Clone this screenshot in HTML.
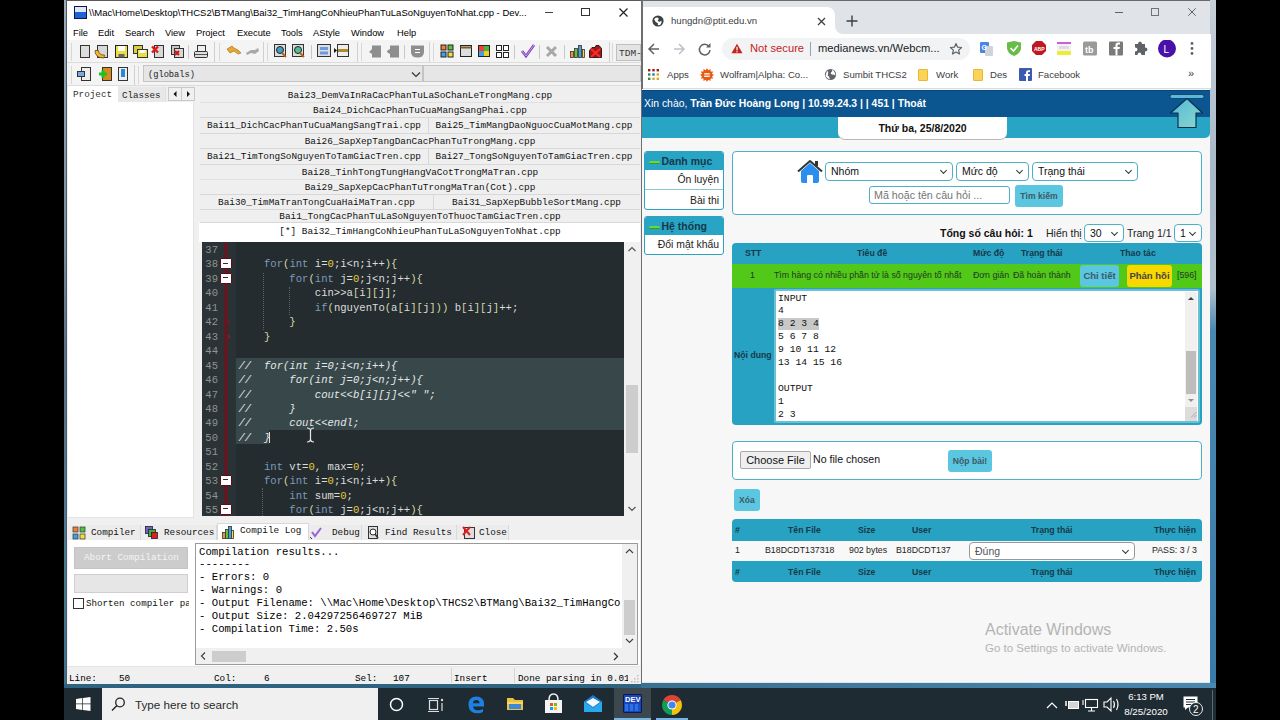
<!DOCTYPE html>
<html><head><meta charset="utf-8">
<style>
*{margin:0;padding:0;box-sizing:border-box}
html,body{width:1280px;height:720px;overflow:hidden;background:#000;font-family:"Liberation Sans",sans-serif}
.a{position:absolute}
.m{font-family:"Liberation Mono",monospace}
.nw{white-space:nowrap}
/* dev c++ */
#dev{left:64px;top:0;width:579px;height:688px;background:#f0f0f0}
.menu span{position:absolute;top:27.5px;font-size:9.3px;color:#000}
.tb{background:#f4f4f4;border-bottom:1px solid #dcdcdc}
.ico{position:absolute;width:13px;height:14px}
.sep{position:absolute;width:1px;background:#c8c8c8}
.etab{position:absolute;height:15px;font-size:9.4px;line-height:15px;color:#111;text-align:center;white-space:nowrap;overflow:hidden}
.code{position:absolute;left:238.5px;margin-top:1px;font-size:10.6px;line-height:14.45px;height:14.45px;color:#dcdcdc;white-space:pre}
.ln{position:absolute;left:202px;margin-top:1px;width:16px;text-align:right;font-size:10.55px;line-height:14.45px;color:#8c9494;font-family:"Liberation Mono",monospace}
.kw{color:#7c9aba}
.pa{color:#d8d8a8}
.nu{color:#e8c840}
.cm{color:#e4e8e8;font-style:italic}
.fold{position:absolute;left:220px;width:12px;height:11px;background:#fff;border:1.5px solid #5e0c18;border-radius:1px}
.fold:after{content:"";position:absolute;left:2px;top:3.5px;width:5px;height:1.2px;background:#3a2a30}
.btab{position:absolute;top:525px;height:16px;font-size:9.3px;line-height:16px;color:#111;font-family:"Liberation Mono",monospace;white-space:nowrap}
.log{position:absolute;left:199px;font-size:10.65px;line-height:12.85px;color:#000;white-space:pre;font-family:"Liberation Mono",monospace}
.st{position:absolute;top:672.5px;font-size:9.3px;line-height:12px;color:#000;font-family:"Liberation Mono",monospace;white-space:pre}
.sel{border:1px solid #4eb0c8;border-radius:4px;background:#fff;font-size:10.5px;line-height:17px;padding-left:5px;color:#111;white-space:nowrap}
.sel:after{content:"";position:absolute;right:6px;top:5px;width:4px;height:4px;border-right:1.2px solid #333;border-bottom:1.2px solid #333;transform:rotate(45deg)}
.btn{background:#5bc6e0;border-radius:3px;text-align:center;font-size:8.6px;font-weight:bold;color:#3c5a66;white-space:nowrap}
.th{font-size:8.7px;font-weight:bold;color:#17384a;white-space:nowrap}
.td{font-size:8.8px;color:#1e3a20;white-space:nowrap}
</style></head><body>

<!-- left wallpaper strip -->
<div class="a" style="left:64px;top:0;width:3px;height:688px;background:linear-gradient(#9aaab8,#7a8ca0 35%,#5a7288 50%,#4a7898 80%,#3a7090)"></div>

<!-- ============ DEV C++ WINDOW ============ -->
<div class="a" style="left:66px;top:0;width:576px;height:684px;background:#f0f0f0;border-left:1px solid #4e5a64;border-top:1px solid #5a5a5a"></div>
<!-- title bar -->
<div class="a" style="left:67px;top:1px;width:574px;height:39px;background:#fff"></div>
<div class="a" style="left:74px;top:6px;width:13px;height:13px;background:linear-gradient(#dfe6f5 0 42%,#1e62d8 42%);border:1px solid #0a1650"></div>
<div class="a nw" style="left:89px;top:7px;font-size:9.53px;color:#000">\\Mac\Home\Desktop\THCS2\BTMang\Bai32_TimHangCoNhieuPhanTuLaSoNguyenToNhat.cpp - Dev...</div>
<div class="a" style="left:545px;top:11.5px;width:8px;height:1.5px;background:#444"></div>
<div class="a" style="left:581px;top:8px;width:9px;height:8px;border:1.3px solid #333"></div>
<svg class="a" style="left:618.5px;top:7.5px" width="9" height="9"><path d="M0.5 0.5L8.5 8.5M8.5 0.5L0.5 8.5" stroke="#222" stroke-width="1.2"/></svg>
<!-- menu -->
<div class="menu">
<span style="left:73px">File</span><span style="left:98px">Edit</span><span style="left:125px">Search</span><span style="left:165px">View</span><span style="left:196px">Project</span><span style="left:237px">Execute</span><span style="left:281px">Tools</span><span style="left:313px">AStyle</span><span style="left:351px">Window</span><span style="left:397px">Help</span>
</div>
<!-- toolbar rows -->
<div class="a tb" style="left:67px;top:40px;width:574px;height:23px"></div>
<div class="a tb" style="left:67px;top:63px;width:574px;height:23px"></div>
<!-- row1 handles / separators -->
<div class="sep" style="left:71px;top:43px;height:18px;background:#d8d8d8"></div>
<div class="sep" style="left:188px;top:45px;height:14px"></div>
<div class="sep" style="left:214px;top:42px;height:20px;background:#d0d0d0"></div>
<div class="sep" style="left:219px;top:43px;height:18px;background:#d8d8d8"></div>
<div class="sep" style="left:263px;top:42px;height:20px;background:#d0d0d0"></div>
<div class="sep" style="left:267px;top:43px;height:18px;background:#d8d8d8"></div>
<div class="sep" style="left:311px;top:45px;height:14px"></div>
<div class="sep" style="left:357px;top:42px;height:20px;background:#d0d0d0"></div>
<div class="sep" style="left:361px;top:43px;height:18px;background:#d8d8d8"></div>
<div class="sep" style="left:404px;top:45px;height:14px"></div>
<div class="sep" style="left:429px;top:42px;height:20px;background:#d0d0d0"></div>
<div class="sep" style="left:433px;top:43px;height:18px;background:#d8d8d8"></div>
<div class="sep" style="left:514px;top:45px;height:14px"></div>
<div class="sep" style="left:539px;top:45px;height:14px"></div>
<div class="sep" style="left:564px;top:45px;height:14px"></div>
<div class="sep" style="left:609px;top:42px;height:20px;background:#d0d0d0"></div>
<div class="sep" style="left:612px;top:43px;height:18px;background:#d8d8d8"></div>
<!-- row1 icons -->
<svg class="a" style="left:78px;top:43px" width="540" height="17">
 <g stroke="#333" stroke-width="1">
 <rect x="2.5" y="2.5" width="9" height="12" fill="#dcdcdc"/>
 <rect x="19.5" y="2.5" width="10" height="12" fill="#d8d8d8"/><path d="M17 7.5Q17 15 26 15L26.5 12Q21 12.5 20.5 7.5Z" fill="#f0b830" stroke="#6a4a10" stroke-width="0.8"/>
 <rect x="37.5" y="2.5" width="12" height="12" fill="#e8e040" stroke="#222"/><rect x="40" y="3" width="7" height="5" fill="#fff" stroke="none"/><rect x="40.5" y="11" width="6" height="3.5" fill="#666" stroke="none"/>
 <rect x="55.5" y="2.5" width="9" height="8" fill="#d8d040"/><rect x="59.5" y="6.5" width="10" height="8" fill="#e8e040"/><rect x="61.5" y="7" width="6" height="3" fill="#fff" stroke="none"/>
 <rect x="76.5" y="2.5" width="9" height="12" fill="#d8d8d8"/><path d="M74 3.5 L80 9.5 M80 3.5 L74 9.5" stroke="#e01818" stroke-width="2.4"/>
 <rect x="93.5" y="2.5" width="8" height="9" fill="#c8c8c8"/><rect x="96.5" y="5.5" width="9" height="9" fill="#d8d8d8"/><path d="M97 8 L101 12 M101 8 L97 12" stroke="#d01818" stroke-width="2.2"/>
 <rect x="119.5" y="2.5" width="8" height="6" fill="#eee"/><rect x="116.5" y="8.5" width="13" height="6" rx="1" fill="#ddd"/><path d="M117 11.5H129" stroke="#555"/>
 </g>
 <path d="M149 6 L154 3 L156 5 L160 7 L163 10 L160 11 L156 8 L152 10Z" fill="#e8a830" stroke="#9a6a10" stroke-width="0.6"/>
 <path d="M168 10 L173 7 L177 7 L180 5 L181 8 L177 11 L173 10 L169 12Z" fill="#a8a8a8"/>
 <g stroke="#333"><rect x="196.5" y="1.5" width="11" height="12" fill="#ddd"/><rect x="214.5" y="1.5" width="11" height="12" fill="#ddd"/></g>
 <circle cx="202" cy="7" r="3.5" fill="#40a0c0" stroke="#222"/><path d="M204 10 L208 14" stroke="#c06010" stroke-width="2"/>
 <circle cx="220" cy="7" r="3.5" fill="#50c090" stroke="#222"/><path d="M222 10 L226 14" stroke="#c06010" stroke-width="2"/>
 <rect x="239.5" y="1.5" width="13" height="12" fill="#ddd" stroke="#333"/><rect x="242" y="4" width="8" height="3" fill="#6a9ae0"/><rect x="242" y="8.5" width="8" height="3" fill="#6a9ae0"/>
 <path d="M256 5 L259 7.5 L256 10Z" fill="#111"/><rect x="259.5" y="1.5" width="11" height="12" fill="#eee" stroke="#333"/><rect x="260" y="6" width="10" height="3" fill="#b08a30"/>
 <g fill="#8e8e8e">
 <path d="M294 2.5H303V14.5H294V11L291 9L294 6Z"/><path d="M312 2.5H321V14.5H312V11L309.5 9.5Q308.5 8.5 309.5 7.5L312 6Z"/>
 <path d="M333 2.5H346V9Q346 14.5 339.5 14.5Q333 14.5 333 9Z"/>
 </g><path d="M337 6.5H342M337 9.5H342" stroke="#fff" stroke-width="1.1"/>
 <g stroke="#222" stroke-width="1">
 <rect x="363" y="2" width="5" height="5" fill="#f08030"/><rect x="370" y="2" width="5" height="5" fill="#60c040"/><rect x="363" y="9" width="5" height="5" fill="#40a0e0"/><rect x="370" y="9" width="5" height="5" fill="#f0e040"/>
 <rect x="382.5" y="2.5" width="11" height="11" fill="#ddd"/><path d="M382.5 4.5 H393.5" stroke="#7a5a30" stroke-width="2"/>
 <rect x="400.5" y="2.5" width="11" height="11" fill="#f04030"/><rect x="406" y="3" width="5" height="5" fill="#50b040" stroke="none"/><rect x="401" y="8" width="5" height="5" fill="#40a0e0" stroke="none"/><rect x="406" y="8" width="5" height="5" fill="#f0d020" stroke="none"/>
 <rect x="418.5" y="2.5" width="5" height="5" fill="#fff"/><rect x="425.5" y="2.5" width="5" height="5" fill="#fff"/><rect x="418.5" y="9.5" width="5" height="5" fill="#fff"/><rect x="425.5" y="9.5" width="5" height="5" fill="#fff"/>
 </g>
 <path d="M444 8 L448 13 L456 2" stroke="#7a40b8" stroke-width="2.6" fill="none"/><path d="M444 8 L448 13 L456 2" stroke="#c8a0f0" stroke-width="1" fill="none"/>
 <path d="M469 4 L478 13 M478 4 L469 13" stroke="#a8a8a8" stroke-width="3"/>
 <g stroke="#333" stroke-width="0.8"><rect x="492.5" y="8.5" width="3" height="6" fill="#f09030"/><rect x="496.5" y="5.5" width="3" height="9" fill="#60c040"/><rect x="500.5" y="2.5" width="3" height="12" fill="#40a0e0"/><rect x="504.5" y="6.5" width="2" height="8" fill="#f0e040"/></g>
 <path d="M511.5 14.5V7.5L514 4.5H517L518 2.5H521L523.5 5.5V14.5Z" fill="#a01818" stroke="#222"/><path d="M513 6 L522 14 M522 6 L513 14" stroke="#ff2a2a" stroke-width="2.2"/>
</svg>
<div class="a" style="left:616px;top:44px;width:25px;height:17px;background:#e4e4e4;border:1px solid #c0c0c0"></div>
<div class="a m nw" style="left:619px;top:47.5px;font-size:9.5px;color:#333">TDM-</div>
<!-- row2 -->
<div class="sep" style="left:71px;top:66px;height:18px;background:#d8d8d8"></div>
<svg class="a" style="left:76px;top:66px" width="60" height="17">
 <rect x="5.5" y="1.5" width="9" height="13" fill="#eee" stroke="#333"/><rect x="1.5" y="5.5" width="7" height="5" fill="#7aa8e0" stroke="#333"/>
 <rect x="26.5" y="1.5" width="9" height="13" fill="#d88a20" stroke="#333"/><path d="M23 8 H31 M27 4 V12" stroke="#20c020" stroke-width="3"/>
 <rect x="42.5" y="1.5" width="9" height="13" fill="#eee" stroke="#333"/><rect x="45" y="3" width="4" height="8" fill="#2a88d8"/>
</svg>
<div class="sep" style="left:134px;top:65px;height:20px;background:#d0d0d0"></div>
<div class="sep" style="left:138px;top:66px;height:18px;background:#d8d8d8"></div>
<div class="a" style="left:143px;top:65px;width:280px;height:17px;background:#e6e6e6;border:1px solid #c4c4c4"></div>
<div class="a m nw" style="left:148px;top:69.5px;font-size:8.7px;color:#222">(globals)</div>
<svg class="a" style="left:411px;top:71px" width="10" height="7"><path d="M1 1.5 L5 5.5 L9 1.5" stroke="#333" fill="none" stroke-width="1.2"/></svg>
<div class="a" style="left:423px;top:65px;width:218px;height:17px;background:#e6e6e6;border:1px solid #c4c4c4"></div>

<!-- project / classes tabs -->
<div class="a" style="left:67px;top:86px;width:574px;height:440px;background:#f0f0f0"></div>
<div class="a" style="left:68px;top:86px;width:50px;height:17px;background:#fff"></div>
<div class="a m nw" style="left:73px;top:89px;font-size:9.3px;color:#333">Project</div>
<div class="a" style="left:118px;top:87px;width:48px;height:15px;background:#e8e8e8;border-right:1px solid #e0e0e0"></div>
<div class="a m nw" style="left:122px;top:90px;font-size:9.2px;color:#222">Classes</div>
<div class="a" style="left:168px;top:87px;width:14px;height:14px;border:1px solid #c8c8c8;background:#f0f0f0"></div>
<div class="a" style="left:181px;top:87px;width:14px;height:14px;border:1px solid #c8c8c8;background:#f0f0f0"></div>
<svg class="a" style="left:168px;top:87px" width="27" height="14"><path d="M8.5 4 L5.5 7 L8.5 10Z M19 4 L22 7 L19 10Z" fill="#111"/></svg>
<div class="a" style="left:68px;top:102px;width:126px;height:416px;background:#fff;border-right:1px solid #e4e4e4;border-bottom:1px solid #e4e4e4"></div>

<!-- editor tab rows -->
<div class="a" style="left:200px;top:87px;width:440px;height:136px;background:#efefef"></div>
<div class="a" style="left:200px;top:102px;width:440px;height:1px;background:#e0e0e0"></div>
<div class="a" style="left:200px;top:117px;width:440px;height:1px;background:#d8d8d8"></div>
<div class="a" style="left:200px;top:133px;width:440px;height:1px;background:#d8d8d8"></div>
<div class="a" style="left:200px;top:148px;width:440px;height:1px;background:#d8d8d8"></div>
<div class="a" style="left:200px;top:164px;width:440px;height:1px;background:#d8d8d8"></div>
<div class="a" style="left:200px;top:179px;width:440px;height:1px;background:#e0e0e0"></div>
<div class="a" style="left:200px;top:194px;width:440px;height:1px;background:#d8d8d8"></div>
<div class="a" style="left:200px;top:209px;width:440px;height:1px;background:#d8d8d8"></div>
<div class="a" style="left:200px;top:222px;width:440px;height:1px;background:#d8d8d8"></div>
<div class="a" style="left:428px;top:118px;width:1px;height:15px;background:#d8d8d8"></div>
<div class="a" style="left:428px;top:149px;width:1px;height:15px;background:#d8d8d8"></div>
<div class="a" style="left:433px;top:195px;width:1px;height:14px;background:#d8d8d8"></div>
<div class="a" style="left:199px;top:223px;width:441px;height:19px;background:#fff"></div>
<div class="etab m" style="left:200px;top:88px;width:440px">Bai23_DemVaInRaCacPhanTuLaSoChanLeTrongMang.cpp</div>
<div class="etab m" style="left:200px;top:103px;width:440px">Bai24_DichCacPhanTuCuaMangSangPhai.cpp</div>
<div class="etab m" style="left:200px;top:118px;width:228px">Bai11_DichCacPhanTuCuaMangSangTrai.cpp</div>
<div class="etab m" style="left:428px;top:118px;width:212px">Bai25_TimMangDaoNguocCuaMotMang.cpp</div>
<div class="etab m" style="left:200px;top:134px;width:440px">Bai26_SapXepTangDanCacPhanTuTrongMang.cpp</div>
<div class="etab m" style="left:200px;top:149px;width:228px">Bai21_TimTongSoNguyenToTamGiacTren.cpp</div>
<div class="etab m" style="left:428px;top:149px;width:212px">Bai27_TongSoNguyenToTamGiacTren.cpp</div>
<div class="etab m" style="left:200px;top:165px;width:440px">Bai28_TinhTongTungHangVaCotTrongMaTran.cpp</div>
<div class="etab m" style="left:200px;top:180px;width:440px">Bai29_SapXepCacPhanTuTrongMaTran(Cot).cpp</div>
<div class="etab m" style="left:200px;top:195px;width:233px">Bai30_TimMaTranTongCuaHaiMaTran.cpp</div>
<div class="etab m" style="left:433px;top:195px;width:207px">Bai31_SapXepBubbleSortMang.cpp</div>
<div class="etab m" style="left:200px;top:209px;width:440px">Bai1_TongCacPhanTuLaSoNguyenToThuocTamGiacTren.cpp</div>
<div class="etab m" style="left:200px;top:224px;width:440px">[*] Bai32_TimHangCoNhieuPhanTuLaSoNguyenToNhat.cpp</div>

<!-- editor -->
<div class="a" style="left:202px;top:242px;width:422px;height:274px;background:#242c2f"></div>
<div class="a" style="left:202px;top:242px;width:22px;height:274px;background:#2b3336"></div>
<div class="a" style="left:224px;top:242px;width:4px;height:274px;background:#5e1a22"></div>
<div class="a" style="left:228px;top:242px;width:8px;height:274px;background:#293235"></div>
<div class="a" style="left:228px;top:320px;width:2px;height:3px;background:#6a1a28"></div>
<div class="a" style="left:228px;top:335px;width:2px;height:3px;background:#8a1a2a"></div>
<div class="a" style="left:236px;top:357.6px;width:388px;height:72.25px;background:#384749"></div>
<div class="a" style="left:236px;top:429.85px;width:33px;height:14.45px;background:#384749"></div>
<div class="a" style="left:624px;top:242px;width:16px;height:274px;background:#f0f0f0"></div>
<svg class="a" style="left:624px;top:242px" width="16" height="274"><path d="M4.5 9 L8 5.5 L11.5 9" stroke="#555" fill="none" stroke-width="1.2"/><path d="M4.5 265 L8 268.5 L11.5 265" stroke="#555" fill="none" stroke-width="1.2"/></svg>
<div class="a" style="left:626px;top:385px;width:12px;height:68px;background:#cdcdcd"></div>
<div id="lns"></div>
<div class="ln" style="top:242px">37</div>
<div class="ln" style="top:256.45px">38</div>
<div class="ln" style="top:270.9px">39</div>
<div class="ln" style="top:285.35px">40</div>
<div class="ln" style="top:299.8px">41</div>
<div class="ln" style="top:314.25px">42</div>
<div class="ln" style="top:328.7px">43</div>
<div class="ln" style="top:343.15px">44</div>
<div class="ln" style="top:357.6px">45</div>
<div class="ln" style="top:372.05px">46</div>
<div class="ln" style="top:386.5px">47</div>
<div class="ln" style="top:400.95px">48</div>
<div class="ln" style="top:415.4px">49</div>
<div class="ln" style="top:429.85px">50</div>
<div class="ln" style="top:444.3px">51</div>
<div class="ln" style="top:458.75px">52</div>
<div class="ln" style="top:473.2px">53</div>
<div class="ln" style="top:487.65px">54</div>
<div class="ln" style="top:502.1px">55</div>
<div class="fold" style="top:258px"></div>
<div class="fold" style="top:272.7px"></div>
<div class="fold" style="top:474.5px"></div>
<div class="fold" style="top:503.5px"></div>
<div class="code m" style="top:256.45px">    <span class="kw">for</span><span class="pa">(</span><span class="kw">int</span> i=<span class="nu">0</span>;i&lt;n;i++<span class="pa">){</span></div>
<div class="code m" style="top:270.9px">        <span class="kw">for</span><span class="pa">(</span><span class="kw">int</span> j=<span class="nu">0</span>;j&lt;n;j++<span class="pa">){</span></div>
<div class="code m" style="top:285.35px">            cin&gt;&gt;a<span class="pa">[</span>i<span class="pa">][</span>j<span class="pa">]</span>;</div>
<div class="code m" style="top:299.8px">            <span class="kw">if</span><span class="pa">(</span>nguyenTo<span class="pa">(</span>a<span class="pa">[</span>i<span class="pa">][</span>j<span class="pa">]))</span> b<span class="pa">[</span>i<span class="pa">][</span>j<span class="pa">]</span>++;</div>
<div class="code m" style="top:314.25px">        <span class="pa">}</span></div>
<div class="code m" style="top:328.7px">    <span class="pa">}</span></div>
<div class="code m cm" style="top:357.6px">//  for(int i=0;i&lt;n;i++){</div>
<div class="code m cm" style="top:372.05px">//      for(int j=0;j&lt;n;j++){</div>
<div class="code m cm" style="top:386.5px">//          cout&lt;&lt;b[i][j]&lt;&lt;" ";</div>
<div class="code m cm" style="top:400.95px">//      }</div>
<div class="code m cm" style="top:415.4px">//      cout&lt;&lt;endl;</div>
<div class="code m cm" style="top:429.85px">//  }</div>
<div class="code m" style="top:458.75px">    <span class="kw">int</span> vt=<span class="nu">0</span>, max=<span class="nu">0</span>;</div>
<div class="code m" style="top:473.2px">    <span class="kw">for</span><span class="pa">(</span><span class="kw">int</span> i=<span class="nu">0</span>;i&lt;n;i++<span class="pa">){</span></div>
<div class="code m" style="top:487.65px">        <span class="kw">int</span> sum=<span class="nu">0</span>;</div>
<div class="code m" style="top:502.1px">        <span class="kw">for</span><span class="pa">(</span><span class="kw">int</span> j=<span class="nu">0</span>;j&lt;n;j++<span class="pa">){</span></div>
<div class="a" style="left:269px;top:432px;width:1px;height:11px;background:#e0e0e0"></div>
<svg class="a" style="left:306px;top:427px" width="9" height="16"><path d="M1 1 Q4.5 1 4.5 4 V12 Q4.5 15 1 15 M8 1 Q4.5 1 4.5 4 M8 15 Q4.5 15 4.5 12" stroke="#e8e8e8" stroke-width="1.2" fill="none"/></svg>
<!-- indent guides -->
<div class="a" style="left:263px;top:273px;width:1px;height:57px;border-left:1px dotted #5a6668"></div>
<div class="a" style="left:289px;top:287px;width:1px;height:28px;border-left:1px dotted #5a6668"></div>
<div class="a" style="left:262px;top:488px;width:1px;height:28px;border-left:1px dotted #5a6668"></div>

<!-- bottom tabs -->
<div class="a" style="left:67px;top:520px;width:574px;height:20px;background:#f0f0f0"></div>
<div class="a" style="left:68px;top:525px;width:73px;height:15px;background:#ececec;border-right:1px solid #dadada"></div>
<div class="a" style="left:141px;top:525px;width:76px;height:15px;background:#ececec;border-right:1px solid #dadada"></div>
<div class="a" style="left:217px;top:523px;width:92px;height:18px;background:#fff;border:1px solid #d8d8d8;border-bottom:0"></div>
<div class="a" style="left:309px;top:525px;width:53px;height:15px;background:#ececec;border-right:1px solid #dadada"></div>
<div class="a" style="left:362px;top:525px;width:95px;height:15px;background:#ececec;border-right:1px solid #dadada"></div>
<div class="a" style="left:457px;top:525px;width:52px;height:15px;background:#ececec;border-right:1px solid #dadada"></div>
<svg class="a" style="left:72px;top:525px" width="440" height="15">
 <g stroke="#333" stroke-width="0.7"><rect x="1" y="2" width="5" height="5" fill="#f08030"/><rect x="8" y="2" width="5" height="5" fill="#50c040"/><rect x="1" y="9" width="5" height="5" fill="#40a0e0"/><rect x="8" y="9" width="5" height="5" fill="#f0e040"/></g>
 <g stroke="#222" stroke-width="0.8"><rect x="73.5" y="1.5" width="7" height="7" fill="#7060d0"/><rect x="76.5" y="4.5" width="7" height="7" fill="#40b040"/><rect x="79.5" y="7.5" width="6" height="6" fill="#e02020"/></g>
 <g stroke="#333" stroke-width="0.8"><rect x="150.5" y="7.5" width="3" height="6" fill="#f09030"/><rect x="153.5" y="4.5" width="3" height="9" fill="#60c040"/><rect x="156.5" y="1.5" width="3" height="12" fill="#40a0e0"/><rect x="159.5" y="5.5" width="2" height="8" fill="#f0e040"/></g>
 <path d="M240 7 L243 11 L249 3" stroke="#9a60d8" stroke-width="2" fill="none"/><path d="M238 12 L240 14" stroke="#333"/>
 <rect x="296.5" y="1.5" width="9" height="12" fill="#ddd" stroke="#333"/><circle cx="301" cy="7" r="3" fill="#fff" stroke="#222"/><path d="M303 9 L306 13" stroke="#333" stroke-width="1.5"/>
 <rect x="392.5" y="2.5" width="10" height="11" fill="#ddd" stroke="#333"/><path d="M391 2 L398 10 M398 2 L391 10" stroke="#e02020" stroke-width="2"/>
</svg>
<div class="btab" style="left:91px">Compiler</div>
<div class="btab" style="left:164px">Resources</div>
<div class="btab" style="left:240px;top:523px">Compile Log</div>
<div class="btab" style="left:332px">Debug</div>
<div class="btab" style="left:385px">Find Results</div>
<div class="btab" style="left:479px">Close</div>

<!-- bottom panel -->
<div class="a" style="left:68px;top:540px;width:572px;height:126px;background:#fff"></div>
<div class="a" style="left:74px;top:547px;width:114px;height:22px;background:#cccccc;border:1px solid #c4c4c4"></div>
<div class="a m nw" style="left:84px;top:552px;font-size:9.3px;color:#f4f4f4">Abort Compilation</div>
<div class="a" style="left:74px;top:574px;width:114px;height:19px;background:#e6e6e6;border:1px solid #cfcfcf"></div>
<div class="a" style="left:73px;top:598px;width:11px;height:11px;background:#fff;border:1px solid #333"></div>
<div class="a m nw" style="left:86px;top:598px;font-size:9.2px;color:#111;width:103px;overflow:hidden">Shorten compiler paths</div>
<div class="a" style="left:195px;top:543px;width:443px;height:122px;background:#fff;border:1px solid #9a9a9a"></div>
<div class="log" style="top:545.5px">Compilation results...
--------
- Errors: 0
- Warnings: 0
- Output Filename: \\Mac\Home\Desktop\THCS2\BTMang\Bai32_TimHangCo
- Output Size: 2.04297256469727 MiB
- Compilation Time: 2.50s</div>
<div class="a" style="left:622px;top:544px;width:15px;height:104px;background:#f0f0f0"></div>
<div class="a" style="left:624px;top:600px;width:11px;height:35px;background:#cdcdcd"></div>
<svg class="a" style="left:622px;top:544px" width="15" height="104"><path d="M4 9 L7.5 5.5 L11 9" stroke="#444" fill="none" stroke-width="1.2"/><path d="M4 95 L7.5 98.5 L11 95" stroke="#444" fill="none" stroke-width="1.2"/></svg>
<div class="a" style="left:196px;top:648px;width:426px;height:16px;background:#f0f0f0"></div>
<div class="a" style="left:212px;top:651px;width:34px;height:11px;background:#cdcdcd"></div>
<svg class="a" style="left:196px;top:648px" width="441" height="16"><path d="M9 4.5 L5.5 8 L9 11.5" stroke="#444" fill="none" stroke-width="1.2"/><path d="M418 5 L421.5 8.5 L418 12" stroke="#333" fill="none" stroke-width="1.3"/></svg>
<div class="a" style="left:622px;top:648px;width:15px;height:16px;background:#f0f0f0"></div>

<!-- status bar -->
<div class="a" style="left:67px;top:666px;width:574px;height:18px;background:#f0f0f0;border-top:1px solid #e4e4e4"></div>
<div class="st" style="left:69px">Line:</div><div class="st" style="left:119px">50</div>
<div class="st" style="left:214px">Col:</div><div class="st" style="left:264px">6</div>
<div class="st" style="left:355px">Sel:</div><div class="st" style="left:393px">107</div>
<div class="st" style="left:454px">Insert</div>
<div class="st" style="left:518px;width:110px;overflow:hidden">Done parsing in 0.01</div>
<div class="a" style="left:451px;top:668px;width:1px;height:15px;background:#d4d4d4"></div>
<div class="a" style="left:514px;top:668px;width:1px;height:15px;background:#d4d4d4"></div>
<svg class="a" style="left:630px;top:674px" width="10" height="10"><g fill="#c0c0c0"><rect x="7" y="7" width="1.5" height="1.5"/><rect x="7" y="4" width="1.5" height="1.5"/><rect x="4" y="7" width="1.5" height="1.5"/><rect x="7" y="1" width="1.5" height="1.5"/><rect x="1" y="7" width="1.5" height="1.5"/><rect x="4" y="4" width="1.5" height="1.5"/></g></svg>
<div class="a" style="left:64px;top:684px;width:578px;height:4px;background:#2e6482"></div>

<!-- ============ CHROME WINDOW ============ -->
<div class="a" style="left:641px;top:0;width:2px;height:688px;background:#6e6e6e"></div>
<div class="a" style="left:643px;top:0;width:567px;height:683px;background:#f7f7f7"></div>
<div class="a" style="left:643px;top:0;width:567px;height:34px;background:#e0e3e7;border-top:1px solid #6a6a6a"></div>
<div class="a" style="left:1210px;top:0;width:6px;height:688px;background:linear-gradient(#c8d0d8,#a8b8c8 25%,#b0c0cc 42%,#4a88b0 48%,#3a7aa8)"></div>
<!-- tab -->
<div class="a" style="left:643px;top:7px;width:192px;height:28px;background:#fff;border-radius:0 8px 0 0"></div>
<svg class="a" style="left:652px;top:15px" width="12" height="12" viewBox="0 0 12 12"><circle cx="6" cy="6" r="5.6" fill="#3c4043"/><path d="M2.2 4.2Q3.5 2 6 2.8Q7.5 3.5 6.2 5Q5 6 6.6 6.6Q8.5 7 9.2 5.6Q10.2 7.5 8.8 9.2Q7 10.8 5.6 9.8Q6.8 8.6 5.2 7.8Q3.2 7.2 2.2 4.2Z" fill="#fff"/></svg>
<div class="a nw" style="left:671px;top:15px;font-size:9.6px;color:#3c4043">hungdn@ptit.edu.vn</div>
<svg class="a" style="left:817px;top:17px" width="9" height="9"><path d="M1 1L8 8M8 1L1 8" stroke="#3c4043" stroke-width="1.3"/></svg>
<div class="a" style="left:835px;top:26px;width:8px;height:8px;background:#fff"></div><div class="a" style="left:835px;top:26px;width:8px;height:8px;background:#e0e3e7;border-radius:0 0 0 8px"></div>
<svg class="a" style="left:846px;top:15px" width="12" height="12"><path d="M6 0.5V11.5M0.5 6H11.5" stroke="#3c4043" stroke-width="1.4"/></svg>
<div class="a" style="left:1115px;top:12px;width:8px;height:1px;background:#5f6368"></div>
<div class="a" style="left:1151px;top:8px;width:8px;height:8px;border:1.2px solid #707478"></div>
<svg class="a" style="left:1188px;top:8px" width="8" height="8"><path d="M0.3 0.3L7.7 7.7M7.7 0.3L0.3 7.7" stroke="#5f6368" stroke-width="1"/></svg>
<!-- toolbar -->
<div class="a" style="left:643px;top:34px;width:568px;height:54px;background:#fff"></div>
<svg class="a" style="left:646px;top:41px" width="70" height="16">
 <path d="M13 8H3.5M8 3L3 8L8 13" stroke="#5f6368" stroke-width="1.5" fill="none"/>
 <path d="M28 8H37.5M33 3L38 8L33 13" stroke="#bdc1c6" stroke-width="1.5" fill="none"/>
 <path d="M63 5.5A5.3 5.3 0 1 0 64 9" stroke="#5f6368" stroke-width="1.5" fill="none"/><path d="M64.5 2V6.5H60Z" fill="#5f6368"/>
</svg>
<div class="a" style="left:722px;top:38px;width:248px;height:22px;background:#f1f3f4;border-radius:11px"></div>
<svg class="a" style="left:731px;top:43px" width="12" height="11"><path d="M6 0.8L11.5 10.3H0.5Z" fill="#c5221f"/><rect x="5.4" y="3.8" width="1.2" height="3.6" fill="#fff"/><rect x="5.4" y="8.2" width="1.2" height="1.2" fill="#fff"/></svg>
<div class="a nw" style="left:750px;top:42px;font-size:11.2px;color:#c5221f">Not secure</div>
<div class="a" style="left:810px;top:42px;width:1px;height:14px;background:#9aa0a6"></div>
<div class="a nw" style="left:818px;top:42px;font-size:11.2px;color:#202124">medianews.vn/Webcm...</div>
<svg class="a" style="left:949px;top:42px" width="14" height="14"><path d="M7 1.5L8.6 5.2L12.6 5.5L9.6 8.1L10.5 12L7 9.9L3.5 12L4.4 8.1L1.4 5.5L5.4 5.2Z" stroke="#5f6368" stroke-width="1.2" fill="none" stroke-linejoin="round"/></svg>
<!-- extensions -->
<svg class="a" style="left:978px;top:40px" width="225" height="18">
 <rect x="2" y="2" width="9" height="11" rx="1" fill="#4a84e8"/><rect x="7" y="6" width="8" height="10" rx="1" fill="#d0d4da"/><text x="3.5" y="10" font-size="7" fill="#fff" font-family="Liberation Sans" font-weight="bold">G</text>
 <path d="M29 2.5L36 1L43 2.5V8Q43 13 36 16Q29 13 29 8Z" fill="#68bc48"/><path d="M32.5 8L35.5 11L40 5.5" stroke="#fff" stroke-width="1.6" fill="none"/>
 <path d="M58 1H64L68 5V11L64 15H58L54 11V5Z" fill="#c01820"/><text x="56" y="10.5" font-size="5" fill="#fff" font-family="Liberation Sans" font-weight="bold">ABP</text>
 <rect x="79" y="2" width="14" height="13" fill="#f4f0f8"/><rect x="79" y="2" width="14" height="2" fill="#c860d8"/><rect x="79" y="11" width="14" height="4" fill="#f0ec30"/><rect x="81" y="6" width="10" height="3" fill="#ddd"/>
 <rect x="105" y="1.5" width="14" height="14" rx="1.5" fill="#9a9a9a"/><text x="107" y="12.5" font-size="9" fill="#fff" font-family="Liberation Sans" font-weight="bold">tb</text>
 <rect x="131" y="1.5" width="14" height="14" rx="1" fill="#7a7a7a"/><path d="M139.5 15.5V9H141.5L142 7H139.5V5.5Q139.5 4.5 140.5 4.5H142V2.5H140Q137.5 2.5 137.5 5V7H135.5V9H137.5V15.5Z" fill="#fff"/>
 <path d="M157 4H160Q160 1.5 162 1.5Q164 1.5 164 4H167V7.5Q169.5 7.5 169.5 9.5Q169.5 11.5 167 11.5V15H163.5Q163.5 12.5 161.5 12.5Q159.5 12.5 159.5 15H157V11.5Q159.5 11.5 159.5 9.5Q159.5 7.5 157 7.5Z" fill="#5f6368" transform="translate(0,0)"/>
 <circle cx="189" cy="8.5" r="9" fill="#4a10a8"/><text x="185.5" y="12.5" font-size="10" fill="#fff" font-family="Liberation Sans">L</text>
 <circle cx="214" cy="3.5" r="1.4" fill="#5f6368"/><circle cx="214" cy="8.5" r="1.4" fill="#5f6368"/><circle cx="214" cy="13.5" r="1.4" fill="#5f6368"/>
</svg>
<!-- bookmarks -->
<svg class="a" style="left:648px;top:69px" width="12" height="12"><g>
 <rect x="0" y="0" width="2.4" height="2.4" fill="#a01818"/><rect x="4.3" y="0" width="2.4" height="2.4" fill="#a01818"/><rect x="8.6" y="0" width="2.4" height="2.4" fill="#a01818"/>
 <rect x="0" y="4.3" width="2.4" height="2.4" fill="#2a8a40"/><rect x="4.3" y="4.3" width="2.4" height="2.4" fill="#2a70c8"/><rect x="8.6" y="4.3" width="2.4" height="2.4" fill="#d8a820"/>
 <rect x="0" y="8.6" width="2.4" height="2.4" fill="#2a8a40"/><rect x="4.3" y="8.6" width="2.4" height="2.4" fill="#d8a820"/><rect x="8.6" y="8.6" width="2.4" height="2.4" fill="#d8a820"/></g></svg>
<div class="a nw" style="left:667px;top:69px;font-size:9.6px;color:#3c4043">Apps</div>
<svg class="a" style="left:700px;top:68px" width="14" height="14" viewBox="0 0 14 14"><path d="M7 0L8.2 2.2L10.5 1L10.6 3.5L13.2 3.6L12 5.8L14 7L12 8.2L13.2 10.4L10.6 10.5L10.5 13L8.2 11.8L7 14L5.8 11.8L3.5 13L3.4 10.5L0.8 10.4L2 8.2L0 7L2 5.8L0.8 3.6L3.4 3.5L3.5 1L5.8 2.2Z" fill="#e85a10"/><rect x="4.2" y="5.2" width="5.6" height="1.3" fill="#fff"/><rect x="4.2" y="7.6" width="5.6" height="1.3" fill="#fff"/></svg>
<div class="a nw" style="left:720px;top:69px;font-size:9.6px;color:#3c4043">Wolfram|Alpha: Co...</div>
<svg class="a" style="left:824px;top:68px" width="13" height="13" viewBox="0 0 13 13"><circle cx="6.5" cy="6.5" r="5.6" fill="#5f6368"/><path d="M3 2.5 Q5 4 4 6 Q3 7.5 5 8.5 L6 11.5 Q3 11 1.5 8 Z M8 1.5 Q9 3.5 7 4.5 Q6 6 8 6.5 Q10.5 6.5 11.3 7.5 Q11.5 4 8 1.5Z" fill="#fff"/></svg>
<div class="a nw" style="left:843px;top:69px;font-size:9.6px;color:#3c4043">Sumbit THCS2</div>
<div class="a" style="left:918px;top:69px;width:10px;height:12px;background:#fbd35a;border-radius:1px;border:1px solid #e8b830"></div>
<div class="a nw" style="left:936px;top:69px;font-size:9.6px;color:#3c4043">Work</div>
<div class="a" style="left:973px;top:69px;width:10px;height:12px;background:#fbd35a;border-radius:1px;border:1px solid #e8b830"></div>
<div class="a nw" style="left:990px;top:69px;font-size:9.6px;color:#3c4043">Des</div>
<svg class="a" style="left:1019px;top:68px" width="13" height="13"><rect width="13" height="13" rx="1" fill="#3b5bb0"/><path d="M9 13V8H10.6L11 6H9V4.8Q9 4 9.8 4H11V2.2H9.4Q7 2.2 7 4.6V6H5.5V8H7V13Z" fill="#fff"/></svg>
<div class="a nw" style="left:1038px;top:69px;font-size:9.6px;color:#3c4043">Facebook</div>
<div class="a nw" style="left:1188px;top:67px;font-size:11px;color:#3c4043">&raquo;</div>
<div class="a" style="left:643px;top:88px;width:568px;height:1px;background:#dadce0"></div>

<!-- page -->
<div class="a" style="left:642px;top:89px;width:568px;height:593px;background:#f7f7f7"></div>
<div class="a" style="left:642px;top:682px;width:568px;height:1px;background:#dfe6ea"></div>
<div class="a" style="left:641px;top:683px;width:575px;height:5px;background:linear-gradient(90deg,#3a7090,#4a88b0)"></div>
<div class="a" style="left:642px;top:90px;width:568px;height:27px;background:#0b5591;border-top:1px solid #08467a"></div>
<div class="a" style="left:642px;top:117px;width:568px;height:21px;background:#28a4c4;border-radius:0 0 5px 0"></div>
<div class="a nw" style="left:644px;top:97.5px;font-size:10.4px;color:#fff">Xin chào, <b>Trần Đức Hoàng Long | 10.99.24.3 | | 451 | Thoát</b></div>
<div class="a" style="left:838px;top:117px;width:169px;height:22px;background:#fff;border-radius:0 0 7px 7px;box-shadow:0 1px 0 #b8b8b8;text-align:center;font-size:10.5px;font-weight:bold;line-height:22px;color:#111">Thứ ba, 25/8/2020</div>
<svg class="a" style="left:1168px;top:93px" width="40" height="38" viewBox="0 0 40 38">
 <defs><linearGradient id="ag" x1="0" y1="0" x2="1" y2="1"><stop offset="0" stop-color="#54b8d8"/><stop offset="1" stop-color="#8ad8cc"/></linearGradient></defs>
 <rect x="2" y="1.5" width="34" height="4" rx="2" fill="#5ab8d8" stroke="#0a3a60" stroke-width="0.8"/>
 <path d="M19 5.5L34.5 20H28V34.5H10V20H2.5Z" fill="url(#ag)" stroke="#0a3050" stroke-width="1.2" stroke-linejoin="round"/>
</svg>

<!-- left nav -->
<div class="a" style="left:644px;top:151px;width:80px;height:59px;background:#fff;border:1px solid #2da3c3;border-radius:3px;overflow:hidden">
 <div style="height:18px;background:#28a4c4"></div>
 <div style="height:20px;border-bottom:1px solid #8cc8d8"></div>
</div>
<div class="a" style="left:649px;top:161px;width:11px;height:3px;background:#6ad83a;border-radius:2px;border-bottom:1px solid #3a9a20"></div>
<div class="a nw" style="left:661.5px;top:155px;font-size:10.5px;font-weight:bold;color:#17384a">Danh mục</div>
<div class="a nw" style="left:640px;top:174px;width:79px;text-align:right;font-size:10.4px;color:#222">Ôn luyện</div>
<div class="a nw" style="left:640px;top:194.5px;width:79px;text-align:right;font-size:10.4px;color:#222">Bài thi</div>
<div class="a" style="left:644px;top:216px;width:80px;height:39px;background:#fff;border:1px solid #2da3c3;border-radius:3px;overflow:hidden">
 <div style="height:18px;background:#28a4c4"></div>
</div>
<div class="a" style="left:649px;top:226px;width:11px;height:3px;background:#6ad83a;border-radius:2px;border-bottom:1px solid #3a9a20"></div>
<div class="a nw" style="left:661.5px;top:220px;font-size:10.5px;font-weight:bold;color:#17384a">Hệ thống</div>
<div class="a nw" style="left:640px;top:239px;width:79px;text-align:right;font-size:10.4px;color:#222">Đổi mật khẩu</div>

<!-- search box -->
<div class="a" style="left:732px;top:151px;width:470px;height:64px;background:#fff;border:1px solid #4eb0c8;border-radius:4px"></div>
<svg class="a" style="left:797px;top:159px" width="26" height="25" viewBox="0 0 26 25">
 <path d="M4 12V22Q4 24 6 24H10V17Q10 16 11 16H15Q16 16 16 17V24H20Q22 24 22 22V12L13 4Z" fill="#2a8ef0"/>
 <path d="M1 12.5L13 2L25 12.5" stroke="#333" stroke-width="2" fill="none" stroke-linejoin="round"/><rect x="18" y="2" width="3" height="5" fill="#333"/>
</svg>
<div class="a sel" style="left:825px;top:162px;width:128px;height:19px">Nhóm</div>
<div class="a sel" style="left:956px;top:162px;width:73px;height:19px">Mức độ</div>
<div class="a sel" style="left:1032px;top:162px;width:106px;height:19px">Trạng thái</div>
<div class="a" style="left:869px;top:186px;width:141px;height:18px;border:1px solid #4eb0c8;border-radius:3px;background:#fff"></div>
<div class="a nw" style="left:874px;top:189px;font-size:10.7px;color:#757575">Mã hoặc tên câu hỏi ...</div>
<div class="a btn" style="left:1015px;top:185px;width:48px;height:22px;line-height:22px">Tìm kiếm</div>

<div class="a nw" style="left:940px;top:227px;font-size:10.5px;font-weight:bold;color:#111">Tổng số câu hỏi: 1</div>
<div class="a nw" style="left:1046px;top:227px;font-size:10.5px;color:#222">Hiển thị</div>
<div class="a sel" style="left:1084px;top:224px;width:40px;height:18px;line-height:16px">30</div>
<div class="a nw" style="left:1127px;top:227px;font-size:10.5px;color:#222">Trang 1/1</div>
<div class="a sel" style="left:1174px;top:224px;width:28px;height:18px;line-height:16px">1</div>

<!-- table 1 -->
<div class="a" style="left:732px;top:243px;width:470px;height:182px;background:#27a2c2;border-radius:4px"></div>
<div class="a th" style="left:745px;top:248px">STT</div>
<div class="a th" style="left:857px;top:248px">Tiêu đề</div>
<div class="a th" style="left:973px;top:248px">Mức độ</div>
<div class="a th" style="left:1021px;top:248px">Trạng thái</div>
<div class="a th" style="left:1120px;top:248px">Thao tác</div>
<div class="a" style="left:732px;top:264px;width:470px;height:24px;background:#52c818"></div>
<div class="a td" style="left:750px;top:270px">1</div>
<div class="a td" style="left:774px;top:270px">Tìm hàng có nhiều phần tử là số nguyên tố nhất</div>
<div class="a td" style="left:973px;top:270px">Đơn giản</div>
<div class="a td" style="left:1013px;top:270px">Đã hoàn thành</div>
<div class="a btn" style="left:1080px;top:265px;width:39px;height:22px;line-height:22px;font-size:9.5px">Chi tiết</div>
<div class="a btn" style="left:1127px;top:265px;width:45px;height:22px;line-height:22px;font-size:9.5px;background:#f8d800;color:#444">Phản hồi</div>
<div class="a td" style="left:1177px;top:270px">[596]</div>
<div class="a th" style="left:734px;top:350px">Nội dung</div>
<div class="a" style="left:774px;top:289px;width:426px;height:134px;background:#fff;border:2px solid #6cc0d4;border-radius:2px"></div>
<div class="a" style="left:778px;top:318px;width:41px;height:12px;background:#c8c8c8"></div>
<div class="a m" style="left:778px;top:292.5px;font-size:9.7px;line-height:12.95px;color:#111;white-space:pre">INPUT
4
8 2 3 4
5 6 7 8
9 10 11 12
13 14 15 16

OUTPUT
1
2 3</div>
<div class="a" style="left:1185px;top:292px;width:12px;height:129px;background:#f0f0f0"></div>
<div class="a" style="left:1186px;top:351px;width:10px;height:43px;background:#bdbdbd"></div>
<div class="a" style="left:1185px;top:407px;width:12px;height:14px;background:#dcdcdc"></div>
<svg class="a" style="left:1185px;top:292px" width="12" height="129"><path d="M3 8L6 5L9 8Z" fill="#404040"/><path d="M3 107L6 110L9 107Z" fill="#909090"/><path d="M11.5 120L6 125.5M11.5 123L9 125.5" stroke="#999" stroke-width="0.8"/></svg>

<!-- submit -->
<div class="a" style="left:732px;top:441px;width:470px;height:39px;background:#fff;border:1px solid #4eb0c8;border-radius:4px"></div>
<div class="a" style="left:740px;top:451px;width:71px;height:18px;background:#efefef;border:1px solid #a8a8a8;border-radius:2px;font-size:11px;line-height:16px;text-align:center;color:#111">Choose File</div>
<div class="a nw" style="left:813px;top:453px;font-size:10.6px;color:#111">No file chosen</div>
<div class="a btn" style="left:948px;top:450px;width:44px;height:22px;line-height:22px">Nộp bài!</div>
<div class="a btn" style="left:734px;top:489px;width:26px;height:22px;line-height:22px">Xóa</div>

<!-- table 2 -->
<div class="a" style="left:732px;top:519px;width:470px;height:63px;background:#27a2c2;border-radius:4px"></div>
<div class="a" style="left:732px;top:541px;width:470px;height:20px;background:#f8f8f8"></div>
<div class="a th" style="left:735px;top:525px">#</div>
<div class="a th" style="left:788px;top:525px">Tên File</div>
<div class="a th" style="left:858px;top:525px">Size</div>
<div class="a th" style="left:912px;top:525px">User</div>
<div class="a th" style="left:1031px;top:525px">Trạng thái</div>
<div class="a th" style="left:1154px;top:525px">Thực hiện</div>
<div class="a td" style="left:735px;top:545px;color:#222">1</div>
<div class="a td" style="left:765px;top:545px;color:#222">B18DCDT137318</div>
<div class="a td" style="left:849px;top:545px;color:#222">902 bytes</div>
<div class="a td" style="left:896px;top:545px;color:#222">B18DCDT137</div>
<div class="a sel" style="left:969px;top:542px;width:166px;height:18px;line-height:16px;color:#555;border-color:#999">Đúng</div>
<div class="a td" style="left:1152px;top:545px;color:#222">PASS: 3 / 3</div>
<div class="a th" style="left:735px;top:567px">#</div>
<div class="a th" style="left:788px;top:567px">Tên File</div>
<div class="a th" style="left:858px;top:567px">Size</div>
<div class="a th" style="left:912px;top:567px">User</div>
<div class="a th" style="left:1031px;top:567px">Trạng thái</div>
<div class="a th" style="left:1154px;top:567px">Thực hiện</div>

<!-- activate windows -->
<div class="a nw" style="left:985px;top:621px;font-size:16px;color:#b4b4b4">Activate Windows</div>
<div class="a nw" style="left:985px;top:642px;font-size:11.5px;color:#b4b4b4">Go to Settings to activate Windows.</div>

<!-- taskbar -->
<div class="a" style="left:64px;top:688px;width:1152px;height:32px;background:#1f2b32"></div>
<svg class="a" style="left:76px;top:697px" width="15" height="14"><g fill="#fff"><path d="M0 2L6.3 1.1V6.6H0Z"/><path d="M7 1L14.5 0V6.6H7Z"/><path d="M0 7.3H6.3V12.9L0 12Z"/><path d="M7 7.3H14.5V14L7 13Z"/></g></svg>
<div class="a" style="left:102px;top:688px;width:276px;height:32px;background:#f0f0f0"></div>
<svg class="a" style="left:111px;top:697px" width="15" height="15"><circle cx="9" cy="5.5" r="4.3" stroke="#222" stroke-width="1.3" fill="none"/><path d="M6 8.5L1 13.5" stroke="#222" stroke-width="1.4"/></svg>
<div class="a nw" style="left:135px;top:698px;font-size:11.7px;color:#2a2a2a">Type here to search</div>
<svg class="a" style="left:385px;top:688px" width="310" height="32">
 <circle cx="11.5" cy="16.5" r="6" stroke="#fff" stroke-width="1.5" fill="none"/>
 <g stroke="#ddd" stroke-width="1.2" fill="none"><rect x="44.5" y="12.5" width="8" height="9"/><path d="M43 10.5H54M43 23.5H54M57 15V23"/></g><circle cx="57" cy="12" r="1.2" fill="#ddd"/>
 <path d="M83.5 17.5Q83 9 91 8.5Q99 8.5 99 16V18.5H88Q88.5 22 92.5 22.3Q95.5 22.5 98 21V24Q95.5 25.5 92 25.3Q84 25 83.5 17.5Z M88 15.2H94.5Q94.5 12 91.3 12Q88.2 12 88 15.2Z" fill="#1e80e0" fill-rule="evenodd"/>
 <path d="M122 10H128L130 12H138V22H122Z" fill="#f0c040"/><rect x="124" y="15" width="12" height="6" fill="#3a8ad8"/><rect x="122" y="14" width="16" height="2" fill="#f8d860"/>
 <path d="M160 12H177V25H160Z" fill="#f4f4f4"/><path d="M164 12Q164 6 168.5 6Q173 6 173 12" stroke="#f4f4f4" stroke-width="1.5" fill="none"/>
 <rect x="165" y="15" width="3" height="3" fill="#f25022"/><rect x="169" y="15" width="3" height="3" fill="#7fba00"/><rect x="165" y="19" width="3" height="3" fill="#00a4ef"/><rect x="169" y="19" width="3" height="3" fill="#ffb900"/>
 <path d="M199 13.5L208 7L217 13.5V24H199Z" fill="#1a7ad0"/><path d="M199 13.5L208 20L217 13.5V24H199Z" fill="#2aa8ec"/><path d="M201 14L208 19L215 14L208 10Z" fill="#f4f8fc"/>
</svg>
<div class="a" style="left:614px;top:688px;width:37px;height:32px;background:#3c474e"></div>
<div class="a" style="left:614px;top:718px;width:37px;height:2px;background:#7ab4e0"></div>
<div class="a" style="left:656px;top:718px;width:32px;height:2px;background:#7ab4e0"></div>
<div class="a" style="left:623px;top:694px;width:19px;height:19px;background:#1a44b8;border:1px solid #0a1a50;border-radius:1px"></div>
<div class="a nw" style="left:625px;top:695px;font-size:7.5px;font-weight:bold;color:#fff">DEV</div>
<div class="a" style="left:625px;top:704px;width:15px;height:7px;background:repeating-linear-gradient(90deg,#2a70e8 0 3px,#1a50c0 3px 5px)"></div>
<svg class="a" style="left:662px;top:695px" width="20" height="20" viewBox="0 0 20 20">
 <path d="M10 10L1.34 5A10 10 0 0 1 18.66 5Z" fill="#db4437"/>
 <path d="M10 10L18.66 5A10 10 0 0 1 10 20Z" fill="#f4c20d"/>
 <path d="M10 10L10 20A10 10 0 0 1 1.34 5Z" fill="#0f9d58"/>
 <circle cx="10" cy="10" r="4.6" fill="#fff"/><circle cx="10" cy="10" r="3.6" fill="#4285f4"/>
</svg>
<!-- tray -->
<svg class="a" style="left:1045px;top:688px" width="80" height="32">
 <path d="M2 20L7 15L12 20" stroke="#fff" stroke-width="1.2" fill="none"/>
 <rect x="23.5" y="13.5" width="10" height="7" stroke="#fff" fill="#fff" fill-opacity="0.8" stroke-width="1"/><path d="M21 13V18" stroke="#fff" stroke-width="1.5"/>
 <rect x="40.5" y="11.5" width="12" height="8" stroke="#fff" fill="none" stroke-width="1.1"/><path d="M46.5 19.5V23M43 23H50M38 12V17" stroke="#fff" stroke-width="1.1"/>
 <path d="M59 14H62L66 10V23L62 19H59Z" stroke="#fff" fill="none" stroke-width="1.1"/><path d="M68.5 13Q70.5 16.5 68.5 20M71.5 11Q74.5 16.5 71.5 22" stroke="#fff" fill="none" stroke-width="1.1"/>
</svg>
<div class="a nw" style="left:1106px;width:80px;text-align:center;top:691px;font-size:9.6px;color:#fff">6:13 PM</div>
<div class="a nw" style="left:1106px;width:80px;text-align:center;top:705.5px;font-size:9.8px;color:#fff">8/25/2020</div>
<svg class="a" style="left:1182px;top:695px" width="22" height="22">
 <path d="M1.5 1.5H15.5V12.5H6L3 15V12.5H1.5Z" fill="#fff"/><path d="M4 4.5H13M4 7H13M4 9.5H10" stroke="#1f2b32" stroke-width="1"/>
 <circle cx="14" cy="14" r="6.5" fill="#1f2b32" stroke="#fff" stroke-width="0.9"/><text x="11" y="18" font-size="10" fill="#fff" font-family="Liberation Sans">2</text>
</svg>
<div class="a" style="left:1212px;top:690px;width:1px;height:30px;background:#5a6a72"></div>
</body></html>
